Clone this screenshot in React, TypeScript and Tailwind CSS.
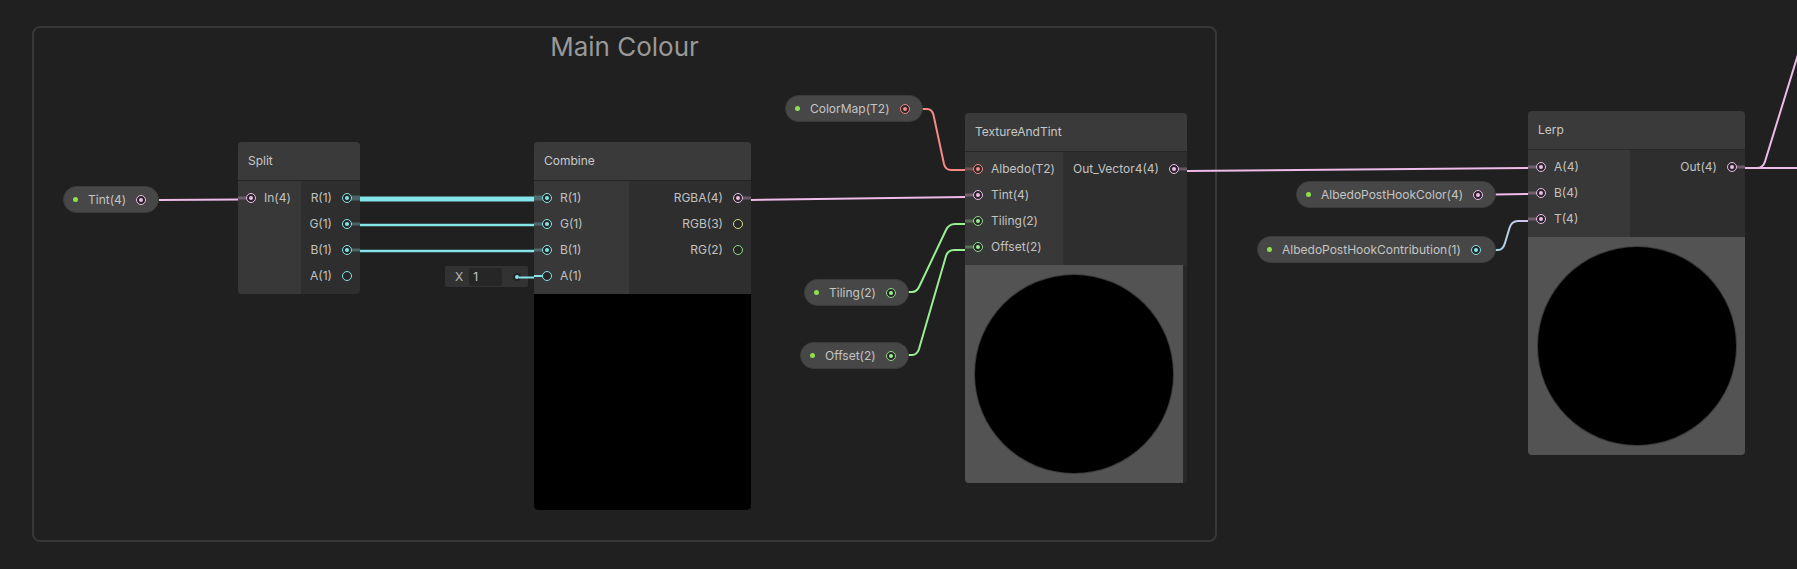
import type { ReactNode } from "react";

type Kind = "v1" | "v2" | "v3" | "v4" | "tex";

const ringColor: Record<Kind, string> = {
  v1: "border-[#84e4e7]",
  v2: "border-[#8fd98a]",
  v3: "border-[#d6dc86]",
  v4: "border-[#efbbe9]",
  tex: "border-[#f58a86]",
};

const dotColor: Record<Kind, string> = {
  v1: "bg-[#84e4e7]",
  v2: "bg-[#9aef92]",
  v3: "bg-[#f6ff9a]",
  v4: "bg-[#efbbe9]",
  tex: "bg-[#f58a86]",
};

const stubColor: Record<Kind, string> = {
  v1: "bg-[#84e4e7]/30",
  v2: "bg-[#9aef92]/30",
  v3: "bg-[#f6ff9a]/30",
  v4: "bg-[#efbbe9]/30",
  tex: "bg-[#f58a86]/30",
};

function Port({ kind, on }: { kind: Kind; on?: boolean }) {
  return (
    <span
      className={`relative flex h-[10px] w-[10px] shrink-0 items-center justify-center rounded-full border-[1.5px] bg-[#262626] ${ringColor[kind]}`}
    >
      {on && <span className={`h-[4px] w-[4px] rounded-full ${dotColor[kind]}`} />}
    </span>
  );
}

type Slot = { label: string; kind: Kind; on?: boolean; thick?: boolean; bright?: boolean };

function InRow({ label, kind, on, thick, bright }: Slot) {
  return (
    <div className="relative flex h-[26px] items-center gap-[8px] pl-[8px]">
      {on && (
        <span
          className={`absolute left-0 top-1/2 w-[12px] -translate-y-1/2 ${thick ? "h-[5px]" : "h-[3px]"} ${stubColor[kind]}`}
        />
      )}
      {bright && <span className="absolute left-0 top-1/2 h-[2px] w-[10px] -translate-y-1/2 bg-[#84e4e7]" />}
      <Port kind={kind} on={on} />
      <span>{label}</span>
    </div>
  );
}

function OutRow({ label, kind, on, thick }: Slot) {
  return (
    <div className="relative flex h-[26px] items-center justify-end gap-[10px] pr-[8px]">
      {on && (
        <span
          className={`absolute right-0 top-1/2 w-[12px] -translate-y-1/2 ${thick ? "h-[5px]" : "h-[3px]"} ${stubColor[kind]}`}
        />
      )}
      <span>{label}</span>
      <Port kind={kind} on={on} />
    </div>
  );
}

function GraphNode({
  pos,
  leftW,
  title,
  inputs,
  outputs,
  children,
}: {
  pos: string;
  leftW: string;
  title: string;
  inputs: Slot[];
  outputs: Slot[];
  children?: ReactNode;
}) {
  return (
    <div className={`absolute overflow-hidden rounded-[4px] text-[12px] text-[#c2c2c2] ${pos}`}>
      <div className="flex h-[39px] items-center border-b border-[#262626] bg-[#3a3a3a] px-[10px] text-[#c8c8c8]">
        {title}
      </div>
      <div className="flex">
        <div className={`bg-[#383838] pb-[5px] pt-[4px] ${leftW}`}>
          {inputs.map((s) => (
            <InRow key={s.label} {...s} />
          ))}
        </div>
        <div className="flex-1 bg-[#2e2e2e] pb-[5px] pt-[4px]">
          {outputs.map((s) => (
            <OutRow key={s.label} {...s} />
          ))}
        </div>
      </div>
      {children}
    </div>
  );
}

function Pill({ pos, label, kind }: { pos: string; label: string; kind: Kind }) {
  return (
    <div
      className={`absolute flex h-[27px] items-center gap-[10px] rounded-full border border-[#3c3c3c] bg-[#474747] pl-[9px] pr-[15px] text-[12px] text-[#c4c4c4] ${pos}`}
    >
      <span className="h-[5px] w-[5px] shrink-0 rounded-full bg-[#8ee04c]" />
      <span className="flex-1 whitespace-nowrap">{label}</span>
      <Port kind={kind} on />
    </div>
  );
}

function CirclePreview({ h }: { h: string }) {
  return (
    <div className={`flex items-center justify-center bg-[#535353] ${h}`}>
      <div className="h-[198px] w-[198px] rounded-full bg-black ring-1 ring-[#3a3a3a]" />
    </div>
  );
}

const PINK = "#efbbe9";
const CYAN = "#84e4e7";
const GREEN = "#9aef92";
const RED = "#f58a86";

export default function App() {
  return (
    <div className="relative h-[569px] w-[1797px] overflow-hidden bg-[#202020] font-[Inter,sans-serif]">
      {/* Group frame */}
      <div className="absolute left-[32px] top-[26px] h-[516px] w-[1185px] rounded-[8px] border-2 border-[#373737]">
        <div className="pt-[3px] text-center text-[26px] leading-[32px] text-[#999999]">Main Colour</div>
      </div>

      {/* Default value field for Combine A(1) */}
      <div className="absolute left-[445px] top-[266px] flex h-[21px] w-[83px] items-center rounded-[2px] bg-[#323232] pl-[10px] pr-[7px] text-[12px] text-[#b8b8b8]">
        <span>X</span>
        <span className="ml-[6px] flex h-[18px] w-[33px] items-center rounded-[3px] bg-[#262626] pl-[4px] text-[#c8c8c8]">
          1
        </span>
        <span className="ml-auto flex h-[8px] w-[8px] items-center justify-center rounded-full bg-[#222222]">
          <span className="h-[4px] w-[4px] rounded-full bg-[#84e4e7]" />
        </span>
      </div>

      {/* Edges */}
      <svg className="pointer-events-none absolute inset-0" width="1797" height="569" fill="none">
        <line x1="159" y1="200" x2="240" y2="199.5" stroke={PINK} strokeWidth="2" />
        <line x1="359" y1="199" x2="535" y2="199" stroke={CYAN} strokeWidth="5" />
        <line x1="359" y1="225" x2="535" y2="225" stroke={CYAN} strokeWidth="2.5" />
        <line x1="359" y1="251" x2="535" y2="251" stroke={CYAN} strokeWidth="2.5" />
        <line x1="519" y1="277.5" x2="535" y2="277.5" stroke={CYAN} strokeWidth="2" />
        <line x1="750" y1="200" x2="966" y2="197" stroke={PINK} strokeWidth="2" />
        <path
          d="M922 109 L927 109 Q932 109 933.5 115 L944 164 Q945.5 170 951 170 L966 170"
          stroke={RED}
          strokeWidth="2"
        />
        <path
          d="M908 292 L912 292 Q917 292 919.5 286 L946 230 Q949 224 955 224 L966 224"
          stroke={GREEN}
          strokeWidth="2"
        />
        <path
          d="M908 355 L912 355 Q917 355 919 349 L946 256 Q948 250 954 250 L966 250"
          stroke={GREEN}
          strokeWidth="2"
        />
        <line x1="1186" y1="171" x2="1529" y2="168" stroke={PINK} strokeWidth="2" />
        <line x1="1495" y1="194.5" x2="1529" y2="194" stroke={PINK} strokeWidth="2" />
        <defs>
          <linearGradient id="tEdge" x1="1496" y1="0" x2="1528" y2="0" gradientUnits="userSpaceOnUse">
            <stop offset="0" stopColor="#9fd8e6" />
            <stop offset="1" stopColor="#d8c4e6" />
          </linearGradient>
        </defs>
        <path
          d="M1495 250 L1498 250 Q1503 250 1505 243 L1509.5 228 Q1511.5 221 1518 221 L1529 221"
          stroke="url(#tEdge)"
          strokeWidth="2"
        />
        <line x1="1744" y1="168" x2="1797" y2="168" stroke={PINK} strokeWidth="2" />
        <path d="M1757 168 Q1763 168 1765 161.5 L1800 48" stroke={PINK} strokeWidth="2" />
      </svg>

      {/* Property pills */}
      <Pill pos="left-[63px] top-[186px] w-[96px]" label="Tint(4)" kind="v4" />
      <Pill pos="left-[785px] top-[95px] w-[138px]" label="ColorMap(T2)" kind="tex" />
      <Pill pos="left-[804px] top-[279px] w-[105px]" label="Tiling(2)" kind="v2" />
      <Pill pos="left-[800px] top-[342px] w-[109px]" label="Offset(2)" kind="v2" />
      <Pill pos="left-[1296px] top-[181px] w-[200px]" label="AlbedoPostHookColor(4)" kind="v4" />
      <Pill pos="left-[1257px] top-[236px] w-[239px]" label="AlbedoPostHookContribution(1)" kind="v1" />

      {/* Nodes */}
      <GraphNode
        pos="left-[238px] top-[142px] w-[122px]"
        leftW="w-[63px]"
        title="Split"
        inputs={[{ label: "In(4)", kind: "v4", on: true }]}
        outputs={[
          { label: "R(1)", kind: "v1", on: true, thick: true },
          { label: "G(1)", kind: "v1", on: true },
          { label: "B(1)", kind: "v1", on: true },
          { label: "A(1)", kind: "v1" },
        ]}
      />

      <GraphNode
        pos="left-[534px] top-[142px] w-[217px]"
        leftW="w-[95px]"
        title="Combine"
        inputs={[
          { label: "R(1)", kind: "v1", on: true, thick: true },
          { label: "G(1)", kind: "v1", on: true },
          { label: "B(1)", kind: "v1", on: true },
          { label: "A(1)", kind: "v1", bright: true },
        ]}
        outputs={[
          { label: "RGBA(4)", kind: "v4", on: true },
          { label: "RGB(3)", kind: "v3" },
          { label: "RG(2)", kind: "v2" },
        ]}
      >
        <div className="h-[216px] rounded-b-[4px] bg-black" />
      </GraphNode>

      <GraphNode
        pos="left-[965px] top-[113px] w-[222px]"
        leftW="w-[98px]"
        title="TextureAndTint"
        inputs={[
          { label: "Albedo(T2)", kind: "tex", on: true },
          { label: "Tint(4)", kind: "v4", on: true },
          { label: "Tiling(2)", kind: "v2", on: true },
          { label: "Offset(2)", kind: "v2", on: true },
        ]}
        outputs={[{ label: "Out_Vector4(4)", kind: "v4", on: true }]}
      >
        <div className="flex bg-[#282828]">
          <div className="w-[218px]">
            <CirclePreview h="h-[218px]" />
          </div>
        </div>
      </GraphNode>

      <GraphNode
        pos="left-[1528px] top-[111px] w-[217px]"
        leftW="w-[102px]"
        title="Lerp"
        inputs={[
          { label: "A(4)", kind: "v4", on: true },
          { label: "B(4)", kind: "v4", on: true },
          { label: "T(4)", kind: "v4", on: true },
        ]}
        outputs={[{ label: "Out(4)", kind: "v4", on: true }]}
      >
        <CirclePreview h="h-[218px]" />
      </GraphNode>
    </div>
  );
}
